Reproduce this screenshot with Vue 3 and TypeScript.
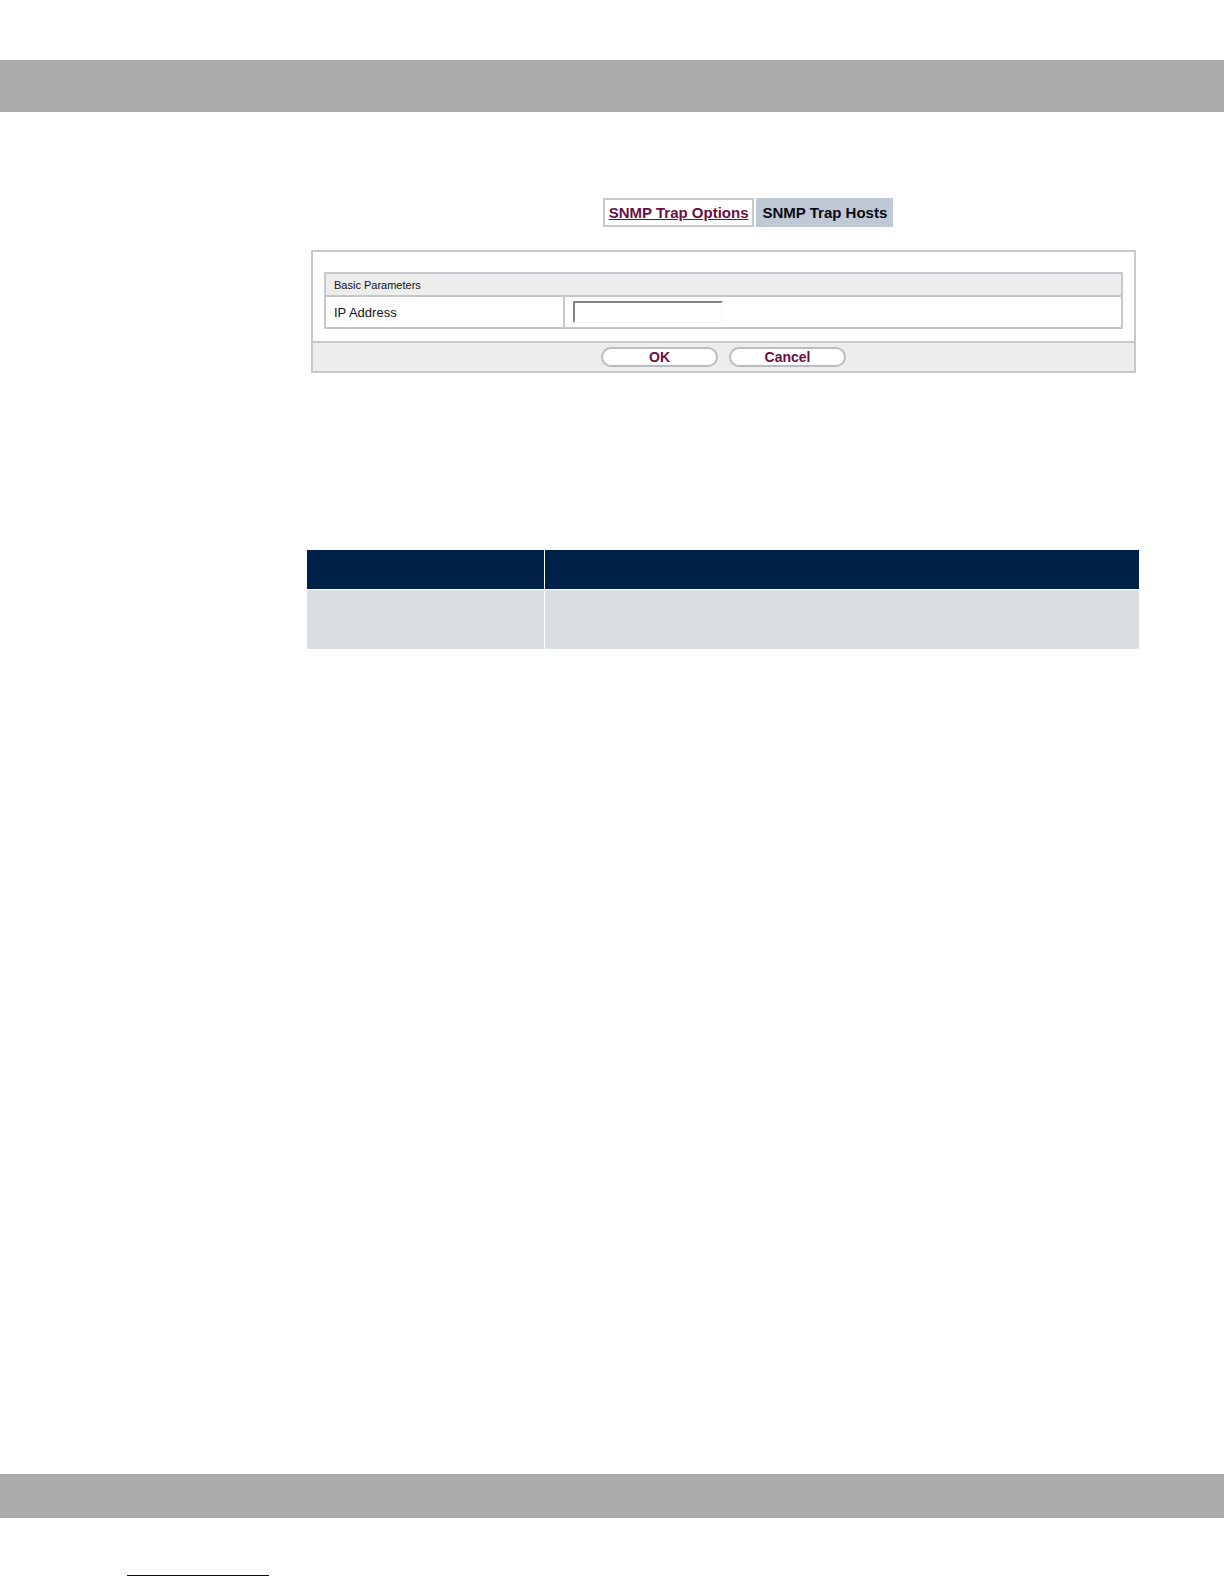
<script setup lang="ts">
import { ref } from 'vue'

const ipAddress = ref('')

function reset(): void {
  ipAddress.value = ''
}
</script>

<template>
  <div class="page">
    <header class="band band-top"></header>

    <main class="content">
      <nav class="tabs">
        <a class="tab" href="#options">SNMP Trap Options</a>
        <a class="tab tab-active" href="#hosts" aria-current="page">SNMP Trap Hosts</a>
      </nav>

      <form class="panel" @submit.prevent>
        <div class="panel-body">
          <table class="params">
            <colgroup>
              <col class="name-column" />
              <col />
            </colgroup>
            <thead>
              <tr>
                <th colspan="2">Basic Parameters</th>
              </tr>
            </thead>
            <tbody>
              <tr>
                <td><label for="ip">IP Address</label></td>
                <td><input id="ip" v-model="ipAddress" type="text" /></td>
              </tr>
            </tbody>
          </table>
        </div>
        <div class="actions">
          <button type="submit">OK</button>
          <button type="button" @click="reset">Cancel</button>
        </div>
      </form>

      <table class="fields">
        <thead>
          <tr>
            <th class="field-name"></th>
            <th></th>
          </tr>
        </thead>
        <tbody>
          <tr>
            <td></td>
            <td></td>
          </tr>
        </tbody>
      </table>
    </main>

    <footer>
      <div class="band band-bottom"></div>
      <a class="footer-link" href="#"></a>
    </footer>
  </div>
</template>

<style>
body {
  margin: 0;
  background: #fff;
}
</style>

<style scoped>
.page {
  box-sizing: border-box;
  min-height: 100vh;
  padding: 60px 0 8px;
  display: flex;
  flex-direction: column;
  font-family: "Liberation Sans", Arial, sans-serif;
  color: #111;
}

.band {
  background: #aaa;
}

.band-top {
  height: 52px;
}

.band-bottom {
  height: 44px;
}

.content {
  flex: 1;
  padding: 86px 85px 0 307px;
}

.tabs {
  display: flex;
  justify-content: center;
  gap: 2px;
  padding-left: 50px;
}

.tab {
  box-sizing: border-box;
  height: 29px;
  padding: 0 4px;
  border: 2px solid #c6c9cc;
  font-size: 15px;
  font-weight: bold;
  line-height: 25px;
  color: #6b0f45;
}

.tab-active {
  border-color: #bfc9d5;
  background: #bfc9d5;
  color: #0a0a12;
  text-decoration: none;
}

.panel {
  margin: 23px 3px 0 4px;
  border: 2px solid #c6c9cc;
}

.panel-body {
  padding: 20px 11px 12px;
}

.params {
  width: 100%;
  border-collapse: collapse;
  table-layout: fixed;
}

.name-column {
  width: 30%;
}

.params th,
.params td {
  border: 2px solid #c3c8cc;
  text-align: left;
}

.params th {
  height: 21px;
  padding: 0 8px;
  background: #ededee;
  font-size: 11px;
  font-weight: normal;
}

.params td {
  height: 30px;
  padding: 0 8px;
  font-size: 13px;
}

.params input {
  display: block;
  box-sizing: border-box;
  width: 150px;
  height: 22px;
  padding: 0 4px;
  border: 2px solid #fafafa;
  border-top-color: #808080;
  border-left-color: #808080;
  background: #fff;
  font: inherit;
  outline: none;
}

.actions {
  display: flex;
  justify-content: center;
  gap: 11px;
  padding: 4px 0;
  border-top: 2px solid #c6c9cc;
  background: #ededee;
}

.actions button {
  box-sizing: border-box;
  width: 117px;
  height: 20px;
  padding: 0;
  border: 2px solid #b9bdc2;
  border-radius: 10px;
  background: #fff;
  font-family: inherit;
  font-size: 14px;
  font-weight: bold;
  line-height: 16px;
  color: #6b0f45;
}

.fields {
  width: 100%;
  margin-top: 177px;
  border-collapse: collapse;
  table-layout: fixed;
}

.fields th {
  height: 39px;
  padding: 0;
  background: #002147;
}

.fields td {
  height: 59px;
  padding: 0;
  background: #d8dee1;
  border-top: 1px solid #fff;
}

.fields th + th,
.fields td + td {
  border-left: 1px solid #fff;
}

.fields .field-name {
  width: 237px;
}

.footer-link {
  display: block;
  width: 142px;
  height: 57px;
  margin-left: 127px;
  border-bottom: 1px solid #00008b;
}
</style>
